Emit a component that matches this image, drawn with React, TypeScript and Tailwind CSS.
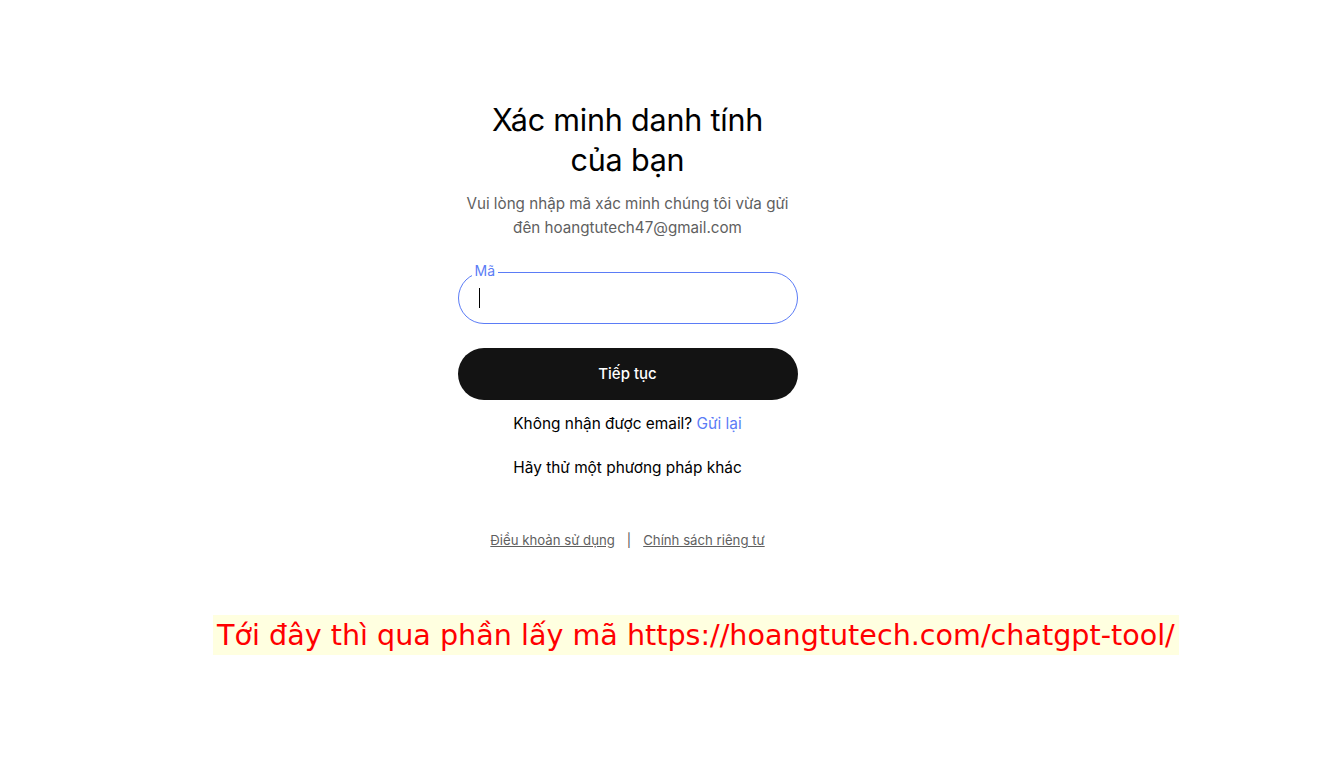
export default function App() {
  return (
    <div className="min-h-screen w-full bg-white" style={{ fontFamily: "Inter, 'Noto Sans', sans-serif" }}>
      <div className="flex flex-col items-center pt-[100px] pr-[72px]">
        <h1 className="text-center text-[30.5px] leading-[40px] font-normal text-black tracking-[-0.2px]">
          Xác minh danh tính
          <br />
          của bạn
        </h1>
        <p className="mt-[12px] text-center text-[15.2px] leading-[24px] text-[#5f5f5f]">
          Vui lòng nhập mã xác minh chúng tôi vừa gửi
          <br />
          đên hoangtutech47@gmail.com
        </p>

        <div className="relative mt-[32px] w-[340px]">
          <div className="flex h-[52px] items-center rounded-full border border-[#5b7cf6] px-[20px]">
            <span className="h-[20px] w-px bg-black" />
          </div>
          <span className="absolute left-[14px] top-[-10px] bg-white px-[3px] text-[14px] leading-[18px] text-[#5b7cf6]">
            Mã
          </span>
        </div>

        <button className="mt-[24px] h-[52px] w-[340px] rounded-full bg-[#131313] text-[15px] font-medium text-white">
          Tiếp tục
        </button>

        <p className="mt-[14px] text-[15.4px] leading-[20px] text-black">
          Không nhận được email? <span className="text-[#5b7cf6]">Gửi lại</span>
        </p>
        <p className="mt-[24px] text-[15.4px] leading-[20px] text-black">Hãy thử một phương pháp khác</p>

        <div className="mt-[53px] flex items-center gap-[12px] text-[13.2px] leading-[18px] text-[#5f5f5f]">
          <span className="underline">Điều khoản sử dụng</span>
          <span className="text-[#555]">|</span>
          <span className="underline">Chính sách riêng tư</span>
        </div>
      </div>

      <div className="mt-[66px] ml-[213px]">
        <span
          className="inline-block bg-[#ffffe0] px-[4px] text-[28.6px] leading-[40px] text-[#ff0000]"
          style={{ fontFamily: "'DejaVu Sans', sans-serif" }}
        >
          Tới đây thì qua phần lấy mã https://hoangtutech.com/chatgpt-tool/
        </span>
      </div>
    </div>
  );
}
